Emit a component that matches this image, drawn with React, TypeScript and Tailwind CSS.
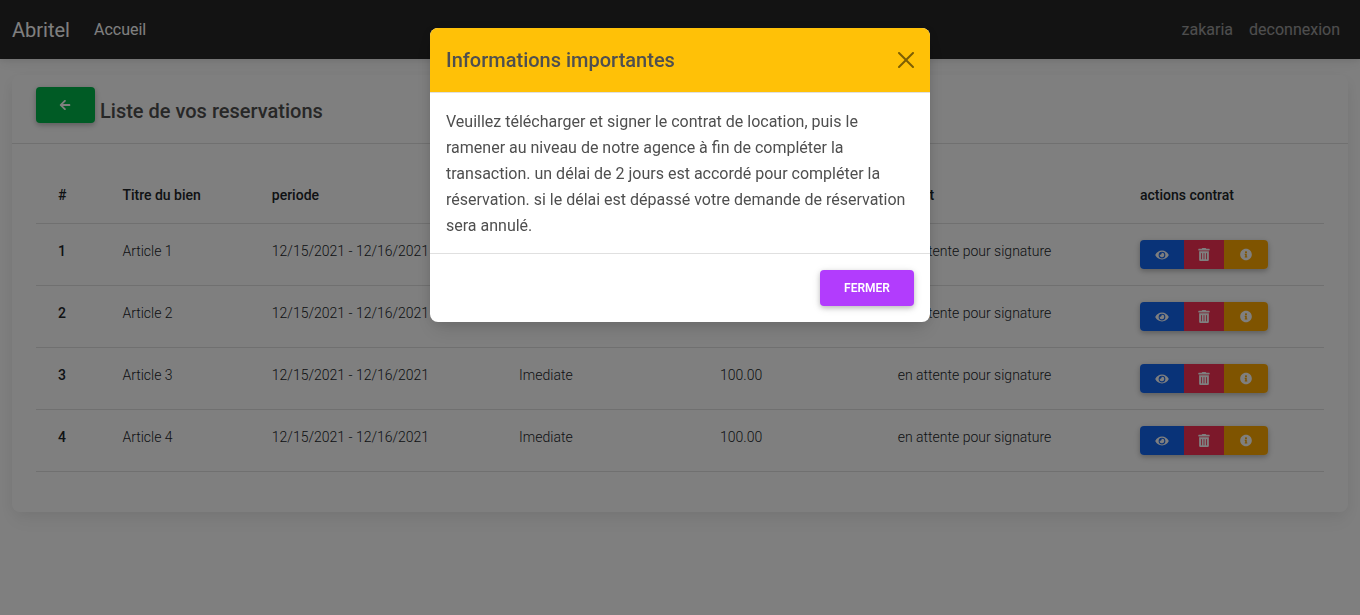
import { FaArrowLeft, FaEye, FaInfoCircle, FaTrashAlt } from "react-icons/fa";

const reservations = [1, 2, 3, 4].map((id) => ({
  id,
  title: `Article ${id}`,
  period: "12/15/2021 - 12/16/2021",
  payment: "Imediate",
  amount: "100.00",
  status: "en attente pour signature",
}));

const headings = ["#", "Titre du bien", "periode", "paiement", "montant", "statut", "actions contrat"];

const raised = "shadow-[0_2px_5px_0_rgba(0,0,0,0.2),0_2px_10px_0_rgba(0,0,0,0.1)]";

function Navbar() {
  return (
    <nav className="flex h-[59px] items-center bg-[#262626] px-3 shadow-[0_4px_12px_0_rgba(0,0,0,0.07),0_2px_4px_rgba(0,0,0,0.05)]">
      <a href="#" className="mr-4 text-xl text-white">
        Abritel
      </a>
      <a href="#accueil" className="px-2 text-white">
        Accueil
      </a>
      <div className="ml-auto flex text-white/55">
        <a href="#profil" className="px-2">
          zakaria
        </a>
        <a href="#deconnexion" className="px-2">
          deconnexion
        </a>
      </div>
    </nav>
  );
}

function ContractActions() {
  return (
    <div className={`inline-flex h-[29px] overflow-hidden rounded align-top text-xs text-white ${raised}`}>
      <button type="button" aria-label="Voir" className="flex w-11 items-center justify-center bg-[#1266f1]">
        <FaEye className="h-3 w-[14px]" />
      </button>
      <button type="button" aria-label="Supprimer" className="flex w-10 items-center justify-center bg-[#f93154]">
        <FaTrashAlt className="h-[13px] w-3" />
      </button>
      <button type="button" aria-label="Informations" className="flex w-11 items-center justify-center bg-[#ffa900]">
        <FaInfoCircle className="h-[13px] w-3" />
      </button>
    </div>
  );
}

function ReservationsTable() {
  return (
    <table className="mb-4 w-full table-fixed border-separate border-spacing-0 text-left text-sm leading-[23px] text-[#212529]">
      <colgroup>
        <col className="w-[5%]" />
        <col className="w-[11.6%]" />
        <col className="w-[19.2%]" />
        <col className="w-[15.6%]" />
        <col className="w-[13.8%]" />
        <col className="w-[18.8%]" />
        <col />
      </colgroup>
      <thead>
        <tr>
          {headings.map((heading) => (
            <th key={heading} scope="col" className="border-b border-[#e0e0e0] px-[22px] py-4 font-medium">
              {heading}
            </th>
          ))}
        </tr>
      </thead>
      <tbody>
        {reservations.map((r) => (
          <tr key={r.id} className="align-top">
            <th scope="row" className="border-b border-[#e0e0e0] px-[22px] py-4 font-medium">
              {r.id}
            </th>
            {[r.title, r.period, r.payment, r.amount, r.status].map((value) => (
              <td key={value} className="border-b border-[#e0e0e0] px-[22px] py-4 font-light whitespace-nowrap">
                {value}
              </td>
            ))}
            <td className="border-b border-[#e0e0e0] px-[22px] py-4">
              <ContractActions />
            </td>
          </tr>
        ))}
      </tbody>
    </table>
  );
}

function InfoModal() {
  return (
    <div className="fixed inset-0 overflow-y-auto bg-black/50">
      <div
        role="dialog"
        aria-modal="true"
        aria-labelledby="modal-title"
        className="mx-auto my-7 w-full max-w-[500px] overflow-hidden rounded-lg bg-white shadow-[0_2px_15px_-3px_rgba(0,0,0,0.16),0_10px_20px_-2px_rgba(0,0,0,0.1)]"
      >
        <div className="flex items-center justify-between border-b border-[#e0e0e0] bg-[#ffc107] p-4">
          <h5 id="modal-title" className="text-xl leading-8 font-medium">
            Informations importantes
          </h5>
          <button type="button" aria-label="Fermer la fenêtre" className="text-black opacity-50">
            <svg viewBox="0 0 16 16" className="h-4 w-4" fill="currentColor">
              <path d="M.293.293a1 1 0 011.414 0L8 6.586 14.293.293a1 1 0 111.414 1.414L9.414 8l6.293 6.293a1 1 0 01-1.414 1.414L8 9.414l-6.293 6.293a1 1 0 01-1.414-1.414L6.586 8 .293 1.707a1 1 0 010-1.414z" />
            </svg>
          </button>
        </div>
        <p className="px-4 pt-4 pb-[14px] leading-[26px]">
          Veuillez télécharger et signer le contrat de location, puis le ramener au niveau de notre agence à fin de
          compléter la transaction. un délai de 2 jours est accordé pour compléter la réservation. si le délai est
          dépassé votre demande de réservation sera annulé.
        </p>
        <div className="flex justify-end border-t border-[#e0e0e0] p-4">
          <button
            type="button"
            className={`h-9 rounded bg-[#b23cfd] px-6 text-xs font-semibold text-white uppercase ${raised}`}
          >
            Fermer
          </button>
        </div>
      </div>
    </div>
  );
}

export default function App() {
  return (
    <div className="min-h-screen bg-white font-[Roboto,sans-serif] text-[#4f4f4f]">
      <Navbar />
      <main className="px-3 pt-4">
        <section className="rounded-lg bg-white shadow-[0_10px_20px_0_rgba(0,0,0,0.05),0_2px_15px_-3px_rgba(0,0,0,0.07)]">
          <header className="flex items-start gap-[5px] border-b border-[#e0e0e0] px-6 pt-3 pb-4">
            <a
              href="#retour"
              aria-label="Retour"
              className={`flex h-9 w-[59px] items-center rounded bg-[#00b74a] px-[23px] text-xs text-white ${raised}`}
            >
              <FaArrowLeft />
            </a>
            <h5 className="mt-2 text-xl leading-8 font-medium">Liste de vos reservations</h5>
          </header>
          <div className="p-6">
            <ReservationsTable />
          </div>
        </section>
      </main>
      <InfoModal />
    </div>
  );
}
